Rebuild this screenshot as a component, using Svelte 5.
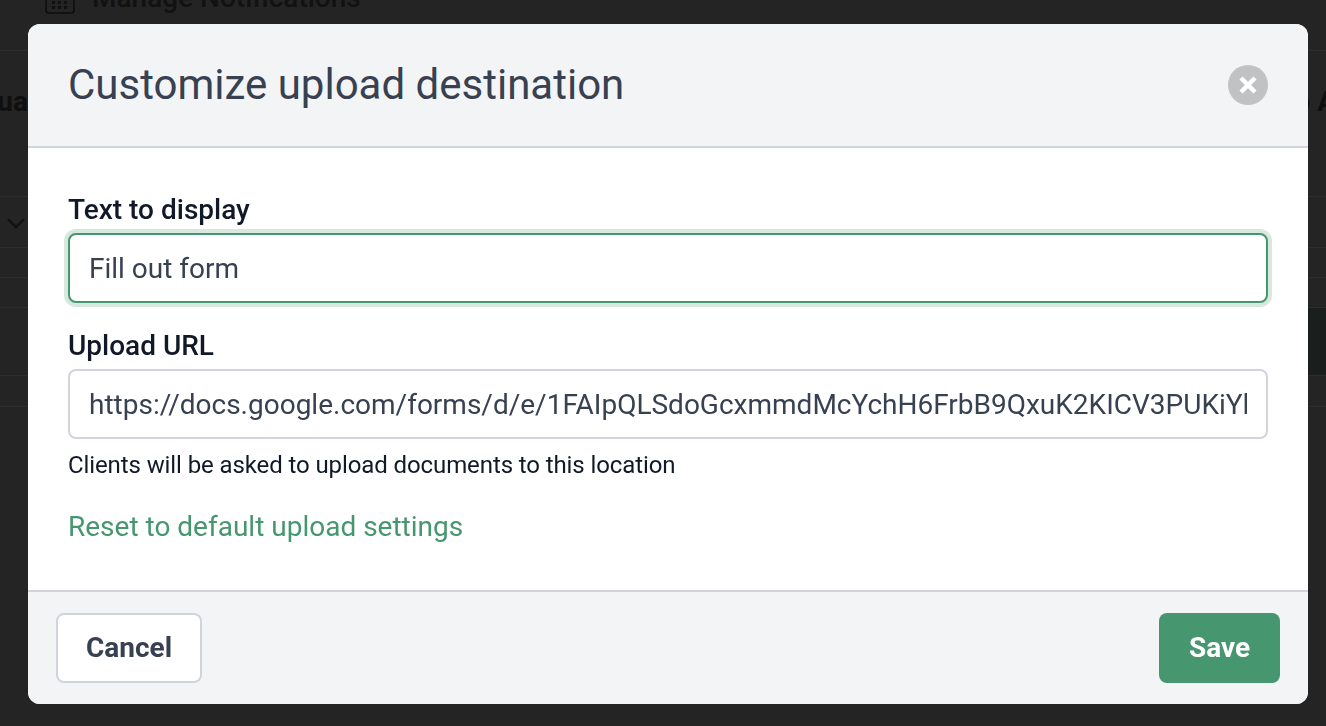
<script>
  const url = "https://docs.google.com/forms/d/e/1FAIpQLSdoGcxmmdMcYchH6FrbB9QxuK2KICV3PUKiYlYdKqGvWnXkPw/viewform";
</script>

<div class="page">
  <div class="topbar">
    <svg class="cal" width="30" height="26" viewBox="0 0 30 26" fill="none" stroke="#111" stroke-width="2"><rect x="1" y="-8" width="28" height="21" rx="3"/><g fill="#111" stroke="none"><rect x="7" y="1" width="3" height="3"/><rect x="13" y="1" width="3" height="3"/><rect x="19" y="1" width="3" height="3"/><rect x="7" y="6" width="3" height="3"/><rect x="13" y="6" width="3" height="3"/><rect x="19" y="6" width="3" height="3"/></g></svg>
    <span class="manage">Manage Notifications</span>
  </div>
  <div class="heads"><span class="h-left">Manual</span><span class="h-right">to All</span></div>
  <div class="row r1"><svg class="chev" width="20" height="12" viewBox="0 0 20 12" fill="none" stroke="#111" stroke-width="2.4"><path d="M2 2l8 8 8-8"/></svg></div>
  <div class="row r2"></div>
  <div class="row r3"></div>
  <div class="row r4"></div>
  <div class="row r5"></div>
</div>

<div class="overlay">
  <section class="modal">
    <header>
      <h1>Customize upload destination</h1>
      <button class="close" aria-label="Close">
        <svg width="20" height="20" viewBox="0 0 20 20" stroke="#fff" stroke-width="4.4" stroke-linecap="butt"><path d="M3 3l14 14M17 3L3 17"/></svg>
      </button>
    </header>
    <div class="body">
      <label class="label" for="t">Text to display</label>
      <input id="t" class="field focus" value="Fill out form" />
      <label class="label second" for="u">Upload URL</label>
      <input id="u" class="field" value={url} />
      <p class="help">Clients will be asked to upload documents to this location</p>
      <a href="#reset" class="reset">Reset to default upload settings</a>
    </div>
    <footer>
      <button class="btn cancel">Cancel</button>
      <button class="btn save">Save</button>
    </footer>
  </section>
</div>

<style>
  :global(body) {
    margin: 0;
    background: #242424;
    font-family: Roboto, "Liberation Sans", sans-serif;
    overflow: hidden;
  }
  .page {
    height: 726px;
    overflow: hidden;
    color: #111;
  }
  .topbar {
    height: 51px;
    box-sizing: border-box;
    border-bottom: 1px solid #2d2d2d;
    display: flex;
    gap: 17px;
    padding-left: 45px;
    align-items: flex-start;
    overflow: hidden;
  }
  .manage {
    font-size: 28px;
    font-weight: 500;
    line-height: 28px;
    margin-top: -16px;
    color: #121212;
  }
  .heads {
    height: 146px;
    box-sizing: border-box;
    display: flex;
    justify-content: space-between;
    border-bottom: 1px solid #2d2d2d;
    font-size: 28px;
    font-weight: 700;
    color: #0f0f0f;
    line-height: 30px;
    padding-top: 36px;
    overflow: hidden;
  }
  .h-left { margin-left: -58px; }
  .h-right { margin-right: -25px; }
  .row {
    box-sizing: border-box;
    border-bottom: 1px solid #2d2d2d;
  }
  .r1 { height: 51px; padding: 20px 0 0 6px; }
  .chev { display: block; }
  .r2 { height: 30px; }
  .r3 { height: 30px; }
  .r4 { height: 68px; background: linear-gradient(to right, #242424 1308px, #1a1e1d 1308px); }
  .r5 { height: 31px; }

  .overlay {
    position: fixed;
    inset: 0;
    display: flex;
    align-items: flex-start;
    justify-content: flex-start;
    padding: 24px 0 0 28px;
  }
  .modal {
    width: 1280px;
    height: 680px;
    background: #fff;
    border-radius: 12px;
    overflow: hidden;
    display: flex;
    flex-direction: column;
  }
  header {
    height: 124px;
    box-sizing: border-box;
    flex: none;
    background: #f3f4f6;
    border-bottom: 2px solid #d1d5db;
    display: flex;
    align-items: center;
    justify-content: space-between;
    padding: 0 40px;
  }
  h1 {
    margin: 0;
    font-size: 42px;
    font-weight: 400;
    line-height: 48px;
    color: #374151;
  }
  .close {
    width: 40px;
    height: 40px;
    border: 0;
    padding: 0;
    border-radius: 50%;
    background: #c1c2c4;
    display: flex;
    align-items: center;
    justify-content: center;
  }
  .body {
    flex: 1;
    padding: 44px 40px 0;
    display: flex;
    flex-direction: column;
    align-items: flex-start;
  }
  .label {
    font-size: 28px;
    font-weight: 500;
    line-height: 36px;
    color: #111827;
    margin-bottom: 5px;
  }
  .second { margin-top: 25px; }
  .field {
    width: 100%;
    height: 70px;
    box-sizing: border-box;
    border: 2px solid #d1d5db;
    border-radius: 8px;
    padding: 0 19px;
    font: 400 28px Roboto, sans-serif;
    color: #374151;
    background: #fff;
    outline: none;
  }
  .focus {
    border-color: #46966f;
    box-shadow: 0 0 0 4px #d7e8df;
  }
  .help {
    margin: 10px 0 0;
    font-size: 24px;
    letter-spacing: -0.1px;
    line-height: 32px;
    color: #111827;
  }
  .reset {
    margin-top: 26px;
    font-size: 28px;
    line-height: 40px;
    color: #46966f;
    text-decoration: none;
  }
  footer {
    height: 114px;
    box-sizing: border-box;
    flex: none;
    background: #f3f4f6;
    border-top: 2px solid #d1d5db;
    display: flex;
    align-items: center;
    justify-content: space-between;
    padding: 0 28px;
  }
  .btn {
    height: 70px;
    border-radius: 8px;
    padding: 0 0 2px;
    font: 700 28px Roboto, sans-serif;
  }
  .cancel {
    width: 146px;
    background: #fff;
    border: 2px solid #d1d5db;
    color: #374151;
  }
  .save {
    width: 121px;
    background: #46966f;
    border: 0;
    color: #fff;
  }
</style>
